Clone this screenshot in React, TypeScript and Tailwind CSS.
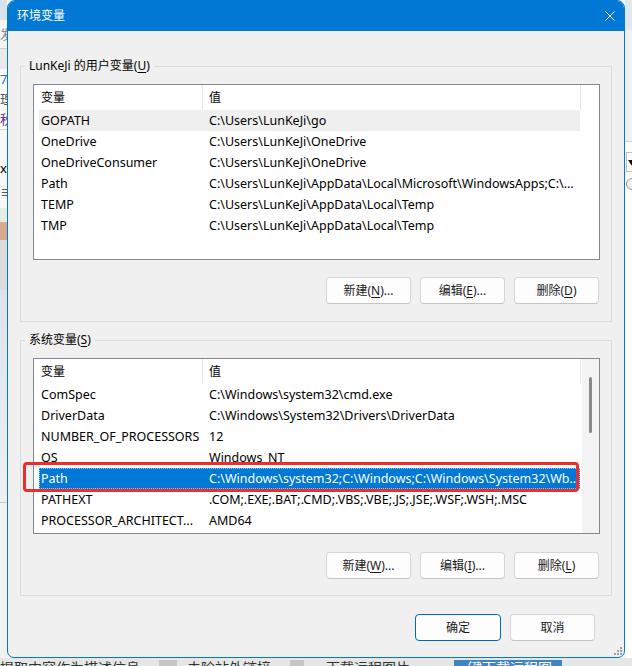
import React from 'react'

type EnvRow = { name: string; value: string }

const userVars: EnvRow[] = [
  { name: 'GOPATH', value: 'C:\\Users\\LunKeJi\\go' },
  { name: 'OneDrive', value: 'C:\\Users\\LunKeJi\\OneDrive' },
  { name: 'OneDriveConsumer', value: 'C:\\Users\\LunKeJi\\OneDrive' },
  { name: 'Path', value: 'C:\\Users\\LunKeJi\\AppData\\Local\\Microsoft\\WindowsApps;C:\\...' },
  { name: 'TEMP', value: 'C:\\Users\\LunKeJi\\AppData\\Local\\Temp' },
  { name: 'TMP', value: 'C:\\Users\\LunKeJi\\AppData\\Local\\Temp' },
]

const sysVars: EnvRow[] = [
  { name: 'ComSpec', value: 'C:\\Windows\\system32\\cmd.exe' },
  { name: 'DriverData', value: 'C:\\Windows\\System32\\Drivers\\DriverData' },
  { name: 'NUMBER_OF_PROCESSORS', value: '12' },
  { name: 'OS', value: 'Windows_NT' },
  { name: 'Path', value: 'C:\\Windows\\system32;C:\\Windows;C:\\Windows\\System32\\Wb...' },
  { name: 'PATHEXT', value: '.COM;.EXE;.BAT;.CMD;.VBS;.VBE;.JS;.JSE;.WSF;.WSH;.MSC' },
  { name: 'PROCESSOR_ARCHITECT...', value: 'AMD64' },
]

// mnemonic letter, underlined like a win32 accelerator
const K = ({ children }: { children: React.ReactNode }) => (
  <span className="underline decoration-1 underline-offset-[2px]">{children}</span>
)

const Btn = ({ children, primary }: { children: React.ReactNode; primary?: boolean }) => (
  <button
    className={
      primary
        ? 'h-[27px] w-[86px] rounded-[4px] border border-[#0067c0] bg-[#fdfdfd] text-[12px] text-[#1a1a1a]'
        : 'h-[27px] w-[85px] rounded-[4px] border border-[#d6d6d6] border-b-[#c4c4c4] bg-[#fdfdfd] text-[12px] text-[#1a1a1a]'
    }
  >
    {children}
  </button>
)

const ListBox = ({
  rows,
  selected,
  active,
  scroll,
}: {
  rows: EnvRow[]
  selected: number
  active?: boolean
  scroll?: boolean
}) => (
  <div className="flex h-[176px] w-[567px] border border-[#828790] bg-white text-black">
    <div className="flex w-[546px] flex-col">
      <div className="flex h-[25px] shrink-0 items-center text-[12px]">
        <div className="flex h-full w-[169px] items-center border-r border-[#e5e5e5] pl-[7px]">变量</div>
        <div className="pl-[6px]">值</div>
      </div>
      {rows.map((r, i) => {
        const sel = i === selected
        const cls = sel
          ? active
            ? 'bg-[#0078d7] text-white outline outline-1 outline-dotted outline-offset-[-1px] outline-[#9cc6ee]'
            : 'bg-[#efefef]'
          : ''
        return (
          <div
            key={r.name + i}
            className={`ml-[5px] flex h-[21px] shrink-0 items-center whitespace-nowrap pt-[1px] text-[12.5px] ${cls}`}
          >
            <div className="w-[170px] pl-[2px]">{r.name}</div>
            <div>{r.value}</div>
          </div>
        )
      })}
    </div>
    <div className="flex flex-1">
      <div className="w-[2px]">
        <div className="h-[25px] w-[1px] bg-[#e5e5e5]" />
      </div>
      {scroll ? (
        <div className="flex flex-1 justify-center bg-[#f3f3f3] pt-[18px]">
          <div className="h-[56px] w-[3px] rounded-full bg-[#8a8a8a]" />
        </div>
      ) : (
        <div className="flex-1" />
      )}
    </div>
  </div>
)

const GroupBox = ({
  label,
  children,
  className,
}: {
  label: React.ReactNode
  children: React.ReactNode
  className: string
}) => (
  <fieldset className={`border border-[#dcdcdc] pl-[12px] pr-[11px] ${className}`}>
    <legend className="-ml-[8px] px-[4px] text-[12px] leading-[16px] text-black">{label}</legend>
    {children}
  </fieldset>
)

export default function App() {
  return (
    <div
      className="relative h-[666px] w-[632px] overflow-hidden bg-[#f3f3f3]"
      style={{ fontFamily: '"Noto Sans", "Noto Sans CJK SC", sans-serif' }}
    >
      {/* page behind the dialog */}
      <div className="flex h-full flex-col">
        <div className="flex h-[658px]">
          <div className="flex w-[7px] flex-col overflow-hidden text-[13px] leading-[16px]">
            <div className="h-[20px] bg-[#d9e3ec]" />
            <div className="h-[28px] bg-[#f5f5f5] pt-[6px] text-[#8a8a8a]">发</div>
            <div className="h-[1px] bg-[#cfcfcf]" />
            <div className="h-[20px] bg-[#e9e9e9]" />
            <div className="h-[20px] bg-[#fafafa] pt-[2px] text-[#2a6fd0]">7</div>
            <div className="h-[20px] bg-[#fafafa] pt-[2px] text-[#555]">理</div>
            <div className="h-[20px] bg-[#fafafa] pt-[2px] text-[#6a2d8a]">秋</div>
            <div className="h-[1px] bg-[#d5d5d5]" />
            <div className="h-[30px] bg-[#f7f7f7]" />
            <div className="h-[24px] bg-[#f7f7f7] text-black">x</div>
            <div className="h-[24px] bg-[#f7f7f7] text-[#333]">≡</div>
            <div className="h-[14px] bg-[#e3efe3]" />
            <div className="h-[18px] bg-[#d9a98b]" />
            <div className="h-[50px] bg-[#dcdcdc]" />
            <div className="h-[212px] bg-gradient-to-b from-[#dde3e8] to-[#eef0f2]" />
            <div className="h-[1px] bg-[#c8c8c8]" />
            <div className="flex-1 bg-[#f2f2f2]" />
          </div>
          <div className="flex-1" />
          <div className="flex w-[7px] flex-col overflow-hidden">
            <div className="h-[30px] bg-[#dfe7ef]" />
            <div className="h-[111px] bg-[#f0f0f0]" />
            <div className="h-[1px] bg-[#cfcfcf]" />
            <div className="flex h-[516px] flex-col bg-white pl-[1px] pt-[10px]">
              <div className="flex h-[20px] w-[10px] items-center border border-[#c0c0c0] pl-[1px] text-[7px] leading-none">▼</div>
              <div className="mt-[6px] h-[12px] w-[12px] rounded-full border border-[#9a9a9a] bg-[#f0f0f0]" />
            </div>
          </div>
        </div>
        <div className="flex h-[8px] items-start overflow-hidden bg-[#e6e6e6] pt-[2px] text-[14px] leading-[16px] text-[#333]">
          <span className="w-[159px] shrink-0 whitespace-nowrap">提取内容作为描述信息</span>
          <span className="h-[8px] w-[18px] shrink-0 bg-[#c6c6c6]" />
          <span className="ml-[10px] w-[103px] shrink-0 whitespace-nowrap">去除站外链接</span>
          <span className="h-[8px] w-[14px] shrink-0 bg-[#c6c6c6]" />
          <span className="ml-[22px] w-[128px] shrink-0 whitespace-nowrap">下载远程图片</span>
          <span className="flex h-[8px] w-[108px] shrink-0 justify-center bg-[#3e86c2] text-white">一键下载远程图片</span>
        </div>
      </div>

      {/* 环境变量 dialog */}
      <div className="absolute left-[7px] top-0 flex h-[658px] w-[618px] flex-col overflow-hidden rounded-t-[8px] rounded-b-[7px] border border-[#0078d4] bg-[#f0f0f0]">
        <div className="flex h-[30px] shrink-0 items-center justify-between bg-[#0078d4] pl-[9px] pr-[9px] text-[12px] text-white">
          <span>环境变量</span>
          <svg width="10" height="10" viewBox="0 0 10 10" fill="none" stroke="white" strokeWidth="1">
            <path d="M0.5 0.5 L9.5 9.5 M9.5 0.5 L0.5 9.5" />
          </svg>
        </div>

        <div className="flex flex-col px-[12px] pt-[27px]">
          <GroupBox
            className="pb-[17px] pt-[10px]"
            label={
              <>
                LunKeJi 的用户变量(<K>U</K>)
              </>
            }
          >
            <ListBox rows={userVars} selected={0} />
            <div className="mr-[1px] mt-[17px] flex justify-end gap-[9px]">
              <Btn>
                新建(<K>N</K>)...
              </Btn>
              <Btn>
                编辑(<K>E</K>)...
              </Btn>
              <Btn>
                删除(<K>D</K>)
              </Btn>
            </div>
          </GroupBox>

          <GroupBox
            className="mt-[10px] pb-[16px] pt-[10px]"
            label={
              <>
                系统变量(<K>S</K>)
              </>
            }
          >
            <ListBox rows={sysVars} selected={4} active scroll />
            <div className="mr-[1px] mt-[18px] flex justify-end gap-[9px]">
              <Btn>
                新建(<K>W</K>)...
              </Btn>
              <Btn>
                编辑(<K>I</K>)...
              </Btn>
              <Btn>
                删除(<K>L</K>)
              </Btn>
            </div>
          </GroupBox>

          <div className="mr-[17px] mt-[18px] flex justify-end gap-[9px]">
            <Btn primary>确定</Btn>
            <Btn primary={false}>取消</Btn>
          </div>
        </div>

        {/* size grip */}
        <svg className="absolute bottom-[2px] right-[2px]" width="8" height="8" viewBox="0 0 8 8" fill="#a0a0a0">
          <rect x="6" y="0" width="2" height="2" />
          <rect x="3" y="3" width="2" height="2" />
          <rect x="6" y="3" width="2" height="2" />
          <rect x="0" y="6" width="2" height="2" />
          <rect x="3" y="6" width="2" height="2" />
          <rect x="6" y="6" width="2" height="2" />
        </svg>
      </div>

      {/* red annotation around the selected Path row */}
      <div className="absolute left-[23px] top-[462px] h-[30px] w-[556px] rounded-[4px] border-[3px] border-[#ee2d2d]" />
    </div>
  )
}
